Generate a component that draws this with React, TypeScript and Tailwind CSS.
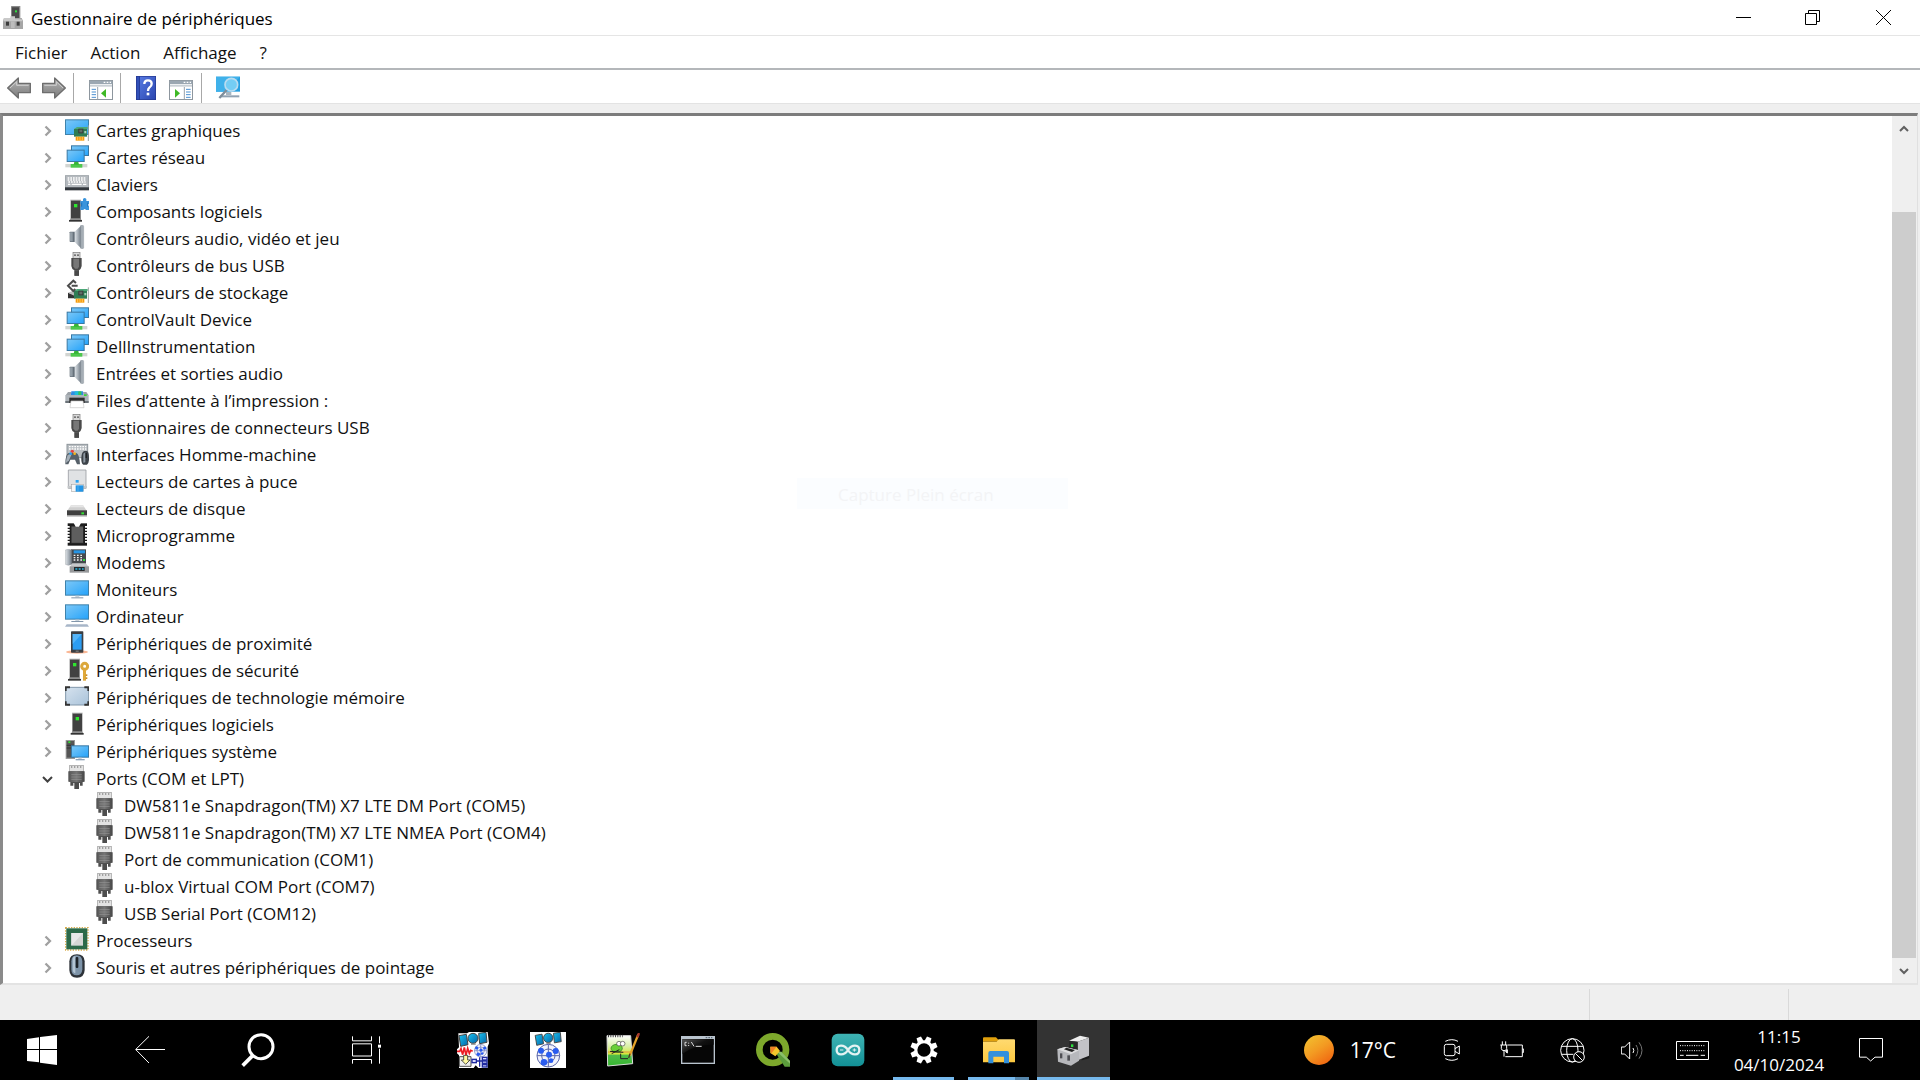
import type { ReactNode } from "react";

type P = { children?: ReactNode };

function Ico({ children }: P) {
  return (
    <svg viewBox="0 0 72 72" className="h-6 w-6 shrink-0 self-start" aria-hidden="true">
      {children}
    </svg>
  );
}

function Defs() {
  return (
    <svg className="absolute h-0 w-0" aria-hidden="true">
      <defs>
        <linearGradient id="screen" x1="0" y1="0" x2="1" y2="1">
          <stop offset="0" stopColor="#7cc8f8" />
          <stop offset="0.5" stopColor="#52b6f8" />
          <stop offset="1" stopColor="#22a2fc" />
        </linearGradient>
        <linearGradient id="steel" x1="0" y1="0" x2="1" y2="0">
          <stop offset="0" stopColor="#dfe4e8" />
          <stop offset="0.5" stopColor="#aab2ba" />
          <stop offset="1" stopColor="#6f7a84" />
        </linearGradient>
        <linearGradient id="plug" x1="0" y1="0" x2="1" y2="0">
          <stop offset="0" stopColor="#5a5a5a" />
          <stop offset="0.5" stopColor="#767676" />
          <stop offset="1" stopColor="#4a4a4a" />
        </linearGradient>
        <linearGradient id="arrow" x1="0" y1="0" x2="0" y2="1">
          <stop offset="0" stopColor="#b5b5b5" />
          <stop offset="1" stopColor="#7b7b7b" />
        </linearGradient>
        <linearGradient id="mem" x1="0" y1="0" x2="1" y2="1">
          <stop offset="0" stopColor="#d6e2ee" />
          <stop offset="1" stopColor="#a9c3da" />
        </linearGradient>
        <linearGradient id="sun" x1="0.1" y1="0" x2="0.8" y2="1">
          <stop offset="0" stopColor="#f2c230" />
          <stop offset="0.5" stopColor="#f39a22" />
          <stop offset="1" stopColor="#f06310" />
        </linearGradient>
        <linearGradient id="folder" x1="0" y1="0" x2="0" y2="1">
          <stop offset="0" stopColor="#ffda70" />
          <stop offset="1" stopColor="#fdc940" />
        </linearGradient>
        <linearGradient id="help" x1="0" y1="0" x2="1" y2="1">
          <stop offset="0" stopColor="#5578e0" />
          <stop offset="1" stopColor="#2b46b0" />
        </linearGradient>
        <linearGradient id="term" x1="0" y1="0" x2="1" y2="0.8">
          <stop offset="0" stopColor="#555" />
          <stop offset="0.5" stopColor="#111" />
          <stop offset="1" stopColor="#000" />
        </linearGradient>
        <linearGradient id="teal" x1="0" y1="0" x2="0" y2="1">
          <stop offset="0" stopColor="#3fb4b4" />
          <stop offset="1" stopColor="#129096" />
        </linearGradient>
        <linearGradient id="sat" x1="0" y1="0" x2="1" y2="1">
          <stop offset="0" stopColor="#19c3f0" />
          <stop offset="1" stopColor="#0565a8" />
        </linearGradient>
        <linearGradient id="note" x1="0" y1="0" x2="0" y2="1">
          <stop offset="0" stopColor="#ffffff" />
          <stop offset="0.35" stopColor="#d9f0a8" />
          <stop offset="0.6" stopColor="#d5e83a" />
          <stop offset="0.65" stopColor="#4fbb4a" />
          <stop offset="1" stopColor="#35b52f" />
        </linearGradient>
      </defs>
    </svg>
  );
}

function Board() {
  return (
    <>
      <path d="M27 36 H66 V59 H27Z" fill="#2f7d54" />
      <path d="M27 36 L36 30 H68 V36Z" fill="#4ca878" />
      <rect x="40" y="35" width="15" height="14" fill="#3b3b3b" />
      <rect x="43" y="38" width="9" height="8" fill="#5f6f66" />
      <rect x="58" y="42" width="6" height="7" fill="#a8d3b9" />
      <rect x="32" y="59" width="26" height="12" fill="#f59a0c" />
      <path d="M38 60 V71 M45 60 V71 M52 60 V71" stroke="#ffc659" strokeWidth="3" />
      <path d="M70 25 V72" stroke="#9ca3a0" strokeWidth="3" />
    </>
  );
}

function GraphicsIcon() {
  return (
    <Ico>
      <rect x="1.500" y="8.500" width="69" height="44" fill="url(#screen)" stroke="#3f82ab" strokeWidth="3" />
      <Board />
    </Ico>
  );
}

function NetworkIcon() {
  return (
    <Ico>
      <rect x="19.500" y="5.500" width="51" height="29" fill="url(#screen)" stroke="#3878a4" strokeWidth="3" />
      <rect x="6.500" y="18.500" width="51" height="34" fill="url(#screen)" stroke="#3878a4" strokeWidth="3" />
      <rect x="1" y="60" width="66" height="10" fill="#d2d5d2" />
      <rect x="17" y="60" width="35" height="11" fill="#4dc84c" />
      <path d="M28 54 H40 L42 62 H26Z" fill="#36b536" />
    </Ico>
  );
}

function KeyboardIcon() {
  return (
    <Ico>
      <rect x="1" y="14" width="70" height="37" fill="#b4b9be" stroke="#8e959b" strokeWidth="2" />
      <path d="M8 21 H64 M8 27 H64" stroke="#fff" strokeWidth="4" strokeDasharray="5 3" />
      <path d="M10 33 H62" stroke="#fff" strokeWidth="4" strokeDasharray="5 3" />
      <path d="M9 40 H16 M20 40 H50 M54 40 H64" stroke="#fff" strokeWidth="4" />
      <rect x="0" y="49" width="72" height="9" fill="#33383e" />
    </Ico>
  );
}

function Tower({ x = 17, y = 5 }: { x?: number; y?: number }) {
  return (
    <g transform={`translate(${x} ${y})`}>
      <rect x="2" y="0" width="32" height="60" fill="#b3b3b3" />
      <rect x="4" y="3" width="28" height="57" fill="#414141" />
      <rect x="13" y="13" width="10" height="10" fill="#2ee62e" />
      <rect x="-2" y="61" width="39" height="5" fill="#333" />
      <path d="M0 61 L4 56 H31 L36 61Z" fill="#8f8f8f" />
    </g>
  );
}

function ComponentIcon() {
  return (
    <Ico>
      <Tower x={14} y={5} />
      <path d="M46 9 H54 V3 Q59 -3 64 3 V9 H72 V17 Q66 19 72 25 V36 H63 Q59 30 55 36 H46 V26 Q50 21 46 17Z" fill="#3a94dc" />
      <path d="M50 14 V26 M68 14 V26" stroke="#1e72b8" strokeWidth="3" />
    </Ico>
  );
}

function SpeakerIcon() {
  return (
    <Ico>
      <rect x="14" y="20" width="17" height="31" rx="2" fill="#66717b" />
      <rect x="15" y="22" width="8" height="27" fill="#929da6" />
      <path d="M29 20 L48 2 V70 L29 51Z" fill="url(#steel)" />
      <path d="M47 1 H53 Q56 1 56 5 V68 Q56 71 52 71 L47 70Z" fill="#a5adb5" stroke="#7c868f" strokeWidth="1" />
    </Ico>
  );
}

function UsbIcon() {
  return (
    <Ico>
      <rect x="24" y="1" width="21" height="19" fill="#d8d8d8" stroke="#777" strokeWidth="2" />
      <rect x="28" y="7" width="4" height="5" fill="#444" />
      <rect x="37" y="7" width="4" height="5" fill="#444" />
      <path d="M19 18 H50 V42 Q48 52 42 55 H28 Q20 51 19 42Z" fill="#4a4a4a" />
      <path d="M25 20 H42 V44 L38 50 H30 L25 43Z" fill="#777" />
      <rect x="28" y="54" width="14" height="18" fill="#555" />
      <path d="M28 60 H42 M28 66 H42" stroke="#333" strokeWidth="2" />
    </Ico>
  );
}

function StorageIcon() {
  return (
    <Ico>
      <path d="M9 41 L28 48 V58 H9Z" fill="#333" />
      <path d="M9 41 L36 31 H44 L28 50Z" fill="#bbb" />
      <Board />
      <path d="M33 12 L25 5 L9 20 L25 36 L31 30 M20 20 H38" fill="none" stroke="#4b4b4b" strokeWidth="6" />
    </Ico>
  );
}

function PrinterIcon() {
  return (
    <Ico>
      <path d="M19 13 H54 L56 26 H17Z" fill="#2f8de4" />
      <rect x="29" y="13" width="11" height="13" fill="#22bdd8" />
      <rect x="40" y="13" width="9" height="13" fill="#2fca52" />
      <path d="M9 15 H19 L17 25 H2Z M54 15 H64 L71 25 H56Z" fill="#9ca2a8" />
      <rect x="1" y="24" width="70" height="23" fill="#aeb4b9" />
      <rect x="1" y="42" width="70" height="6" fill="#6c7379" />
      <rect x="57" y="22" width="8" height="5" fill="#35dd35" />
      <rect x="13" y="32" width="46" height="16" fill="#2e2e2e" />
      <path d="M18 42 H54 L57 62 H15Z" fill="#fff" stroke="#c5c5c5" strokeWidth="2" />
    </Ico>
  );
}

function HidIcon() {
  return (
    <Ico>
      <rect x="6" y="10" width="62" height="40" fill="#b9bec2" stroke="#8e959b" strokeWidth="3" />
      <path d="M12 17 H64 M12 24 H64" stroke="#fff" strokeWidth="4" strokeDasharray="5 3" />
      <path d="M1 70 Q1 38 11 36 H34 Q43 38 45 70 H36 L30 56 H16 L10 70Z" fill="#566069" />
      <path d="M3 66 Q4 44 12 40 H20 L12 58Z" fill="#a5afb8" />
      <circle cx="22" cy="31" r="5" fill="#e8423c" />
      <circle cx="17" cy="38" r="4" fill="#2ba2ee" />
      <circle cx="29" cy="38" r="4" fill="#f2b41c" />
      <path d="M55 71 Q48 68 49 50 Q50 32 58 30 H66 Q72 32 72 50 Q73 66 66 71Z" fill="#3d4349" />
      <path d="M55 65 V38 L61 34 V64Z" fill="#8d98a2" />
      <rect x="62" y="36" width="3" height="15" fill="#111" />
    </Ico>
  );
}

function CardIcon() {
  return (
    <Ico>
      <path d="M10 6 H63 V61 H10Z" fill="#e0e2e4" stroke="#9a9ea2" strokeWidth="2.500" />
      <rect x="8" y="54" width="58" height="7" fill="#c5c8ca" />
      <rect x="32" y="36" width="9" height="8" fill="#2aa2f2" />
      <rect x="20" y="49" width="35" height="22" fill="#f7f7f7" stroke="#9a9a9a" strokeWidth="1.500" />
      <rect x="32" y="52" width="23" height="19" fill="#2295e6" />
      <path d="M39 52 V71" stroke="#67bdf5" strokeWidth="2" />
    </Ico>
  );
}

function DiskIcon() {
  return (
    <Ico>
      <path d="M18 31 H54 L66 48 H6Z" fill="#cfcfcf" />
      <path d="M18 31 H54 L58 37 H14Z" fill="#e6e6e6" />
      <rect x="6" y="46" width="60" height="16" fill="#3f3f3f" />
      <rect x="6" y="61" width="60" height="4" fill="#b5b5b5" />
      <rect x="49" y="52" width="8" height="6" fill="#31e031" />
    </Ico>
  );
}

function ChipIcon() {
  return (
    <Ico>
      <rect x="8" y="4" width="58" height="67" fill="#1c1c1c" />
      <path d="M10 12 V66 M64 12 V66" stroke="#fff" strokeWidth="8" strokeDasharray="5 4" />
      <rect x="18" y="12" width="38" height="52" fill="#5e5e5e" stroke="#222" strokeWidth="3" />
      <path d="M26 3 H48 L42 14 H32Z" fill="#fff" />
    </Ico>
  );
}

function ModemIcon() {
  return (
    <Ico>
      <path d="M18 1 H63 V46 H18Z" fill="#45494d" />
      <rect x="26" y="4" width="34" height="9" fill="#2796e6" />
      <path d="M26 19 H52 M26 26 H52 M26 33 H52" stroke="#f2f2f2" strokeWidth="4" strokeDasharray="5 5" />
      <rect x="54" y="30" width="6" height="6" fill="#2fd93b" />
      <path d="M1 3 Q10 -2 20 3 V46 Q10 52 1 46Z" fill="url(#steel)" stroke="#868c91" />
      <path d="M22 43 H62 L71 53 H15Z" fill="#c6c8ca" />
      <rect x="14" y="52" width="58" height="19" fill="#97999b" />
      <rect x="27" y="54" width="32" height="12" fill="#262b2e" />
      <path d="M31 60 H56" stroke="#27b6e0" strokeWidth="4" strokeDasharray="6 4" />
    </Ico>
  );
}

function MonitorIcon() {
  return (
    <Ico>
      <rect x="1.500" y="14.500" width="69" height="43" fill="url(#screen)" stroke="#3f82ab" strokeWidth="3" />
      <rect x="31" y="59" width="12" height="5" fill="#c8d2da" />
      <rect x="19" y="64" width="36" height="3" fill="#8296ab" />
    </Ico>
  );
}

function ComputerIcon() {
  return (
    <Ico>
      <rect x="1.500" y="5.500" width="69" height="43" fill="url(#screen)" stroke="#3f82ab" strokeWidth="3" />
      <rect x="31" y="50" width="12" height="4" fill="#c8d2da" />
      <rect x="19" y="54" width="36" height="3" fill="#8296ab" />
      <path d="M5 64 H67 L72 71 H0Z" fill="#a7b6c8" />
    </Ico>
  );
}

function ProximityIcon() {
  return (
    <Ico>
      <ellipse cx="36" cy="66" rx="33" ry="5" fill="#f9a57a" opacity="0.8" />
      <rect x="18" y="4" width="37" height="64" rx="2" fill="#3b3e42" />
      <rect x="23" y="12" width="27" height="47" fill="#2c9df2" />
      <path d="M23 12 H50 L23 42Z" fill="#55b5f8" />
      <rect x="32" y="62" width="9" height="3" fill="#888" />
    </Ico>
  );
}

function SecurityIcon() {
  return (
    <Ico>
      <Tower x={11} y={5} />
      <circle cx="59" cy="28" r="9" fill="none" stroke="#dca83c" strokeWidth="9" />
      <rect x="54" y="38" width="9" height="33" fill="#e0a93a" />
      <rect x="62" y="52" width="5" height="5" fill="#c88c22" />
      <rect x="62" y="61" width="5" height="5" fill="#c88c22" />
    </Ico>
  );
}

function MemoryIcon() {
  return (
    <Ico>
      <rect x="2" y="10" width="69" height="53" rx="6" fill="url(#mem)" stroke="#8197aa" strokeWidth="3" />
      <path d="M2 21 V10 H15 M58 10 H70 V21 M70 52 V62 H58 M15 62 H2 V52" fill="none" stroke="#333" strokeWidth="6" />
    </Ico>
  );
}

function SoftwareIcon() {
  return (
    <Ico>
      <Tower x={19} y={5} />
    </Ico>
  );
}

function SystemIcon() {
  return (
    <Ico>
      <rect x="2" y="6" width="28" height="57" fill="#9a9a9a" />
      <rect x="5" y="9" width="22" height="50" fill="#555" />
      <rect x="10" y="10" width="6" height="5" fill="#2ee62e" />
      <path d="M5 22 H27 M5 30 H27" stroke="#333" strokeWidth="3" />
      <rect x="19.500" y="23.500" width="51" height="34" fill="url(#screen)" stroke="#3878a4" strokeWidth="3" />
      <rect x="40" y="59" width="10" height="4" fill="#c8d2da" />
      <rect x="32" y="63" width="27" height="4" fill="#8ea2b8" />
    </Ico>
  );
}

function PortIcon() {
  return (
    <Ico>
      <rect x="14" y="1" width="41" height="20" fill="#e3e3e3" stroke="#999" strokeWidth="2" />
      <path d="M18 6 H52" stroke="#8a8a8a" strokeWidth="4" strokeDasharray="4 5" />
      <path d="M10 19 H59 V50 H53 V62 H45 V54 H25 V62 H16 V50 H10Z" fill="#505050" />
      <rect x="13" y="19" width="43" height="32" fill="url(#plug)" />
      <path d="M19 29 H50 M19 36 H50 M19 43 H50" stroke="#999" strokeWidth="2" />
      <rect x="28" y="54" width="14" height="18" fill="#4d4d4d" />
    </Ico>
  );
}

function CpuIcon() {
  return (
    <Ico>
      <rect x="2" y="2" width="67" height="67" fill="none" stroke="#d9ad4c" strokeWidth="4" strokeDasharray="4 4" />
      <rect x="4" y="4" width="63" height="63" fill="#2c6a49" />
      <rect x="19" y="18" width="35" height="38" fill="#d5d7d5" />
      <path d="M19 18 H54 L19 56Z" fill="#e8e9e8" />
    </Ico>
  );
}

function MouseIcon() {
  return (
    <Ico>
      <path d="M36 1 Q58 1 59 22 V48 Q58 71 36 71 Q14 71 13 48 V22 Q14 1 36 1Z" fill="#2d3238" />
      <path d="M35 4 Q51 4 52 22 V46 Q51 64 35 64 Q19 64 19 46 V22 Q19 4 35 4Z" fill="#7d93a8" />
      <path d="M23 14 Q24 6 31 6 V58 Q22 56 23 42Z" fill="#b3c4d3" />
      <rect x="32" y="9" width="8" height="33" rx="3" fill="#1e2329" />
    </Ico>
  );
}

const groups: [string, () => ReactNode][] = [
  ["Cartes graphiques", GraphicsIcon],
  ["Cartes réseau", NetworkIcon],
  ["Claviers", KeyboardIcon],
  ["Composants logiciels", ComponentIcon],
  ["Contrôleurs audio, vidéo et jeu", SpeakerIcon],
  ["Contrôleurs de bus USB", UsbIcon],
  ["Contrôleurs de stockage", StorageIcon],
  ["ControlVault Device", NetworkIcon],
  ["DellInstrumentation", NetworkIcon],
  ["Entrées et sorties audio", SpeakerIcon],
  ["Files d’attente à l’impression :", PrinterIcon],
  ["Gestionnaires de connecteurs USB", UsbIcon],
  ["Interfaces Homme-machine", HidIcon],
  ["Lecteurs de cartes à puce", CardIcon],
  ["Lecteurs de disque", DiskIcon],
  ["Microprogramme", ChipIcon],
  ["Modems", ModemIcon],
  ["Moniteurs", MonitorIcon],
  ["Ordinateur", ComputerIcon],
  ["Périphériques de proximité", ProximityIcon],
  ["Périphériques de sécurité", SecurityIcon],
  ["Périphériques de technologie mémoire", MemoryIcon],
  ["Périphériques logiciels", SoftwareIcon],
  ["Périphériques système", SystemIcon],
  ["Ports (COM et LPT)", PortIcon],
  ["Processeurs", CpuIcon],
  ["Souris et autres périphériques de pointage", MouseIcon],
];

const ports = [
  "DW5811e Snapdragon(TM) X7 LTE DM Port (COM5)",
  "DW5811e Snapdragon(TM) X7 LTE NMEA Port (COM4)",
  "Port de communication (COM1)",
  "u-blox Virtual COM Port (COM7)",
  "USB Serial Port (COM12)",
];

function Chevron({ open }: { open: boolean }) {
  return (
    <svg viewBox="0 0 16 16" className="mr-2.5 h-4 w-4 shrink-0" fill="none" aria-hidden="true">
      {open ? (
        <path d="M4 6 L8.500 10.500 L13 6" stroke="#404040" strokeWidth="2" />
      ) : (
        <path d="M6.500 3.500 L11 8 L6.500 12.500" stroke="#a0a0a0" strokeWidth="2.300" />
      )}
    </svg>
  );
}

function Tree() {
  return (
    <ul role="tree" aria-label="Périphériques" className="min-w-0 flex-1 pt-px pl-9 text-[17px] leading-[27px]">
      {groups.map(([label, Icon]) => {
        const open = label.startsWith("Ports");
        return (
          <li key={label} role="treeitem" aria-expanded={open}>
            <button type="button" className="flex h-[27px] items-center whitespace-nowrap">
              <Chevron open={open} />
              <Icon />
              <span className="ml-[7px]">{label}</span>
            </button>
            {open && (
              <ul role="group" className="pl-[54px]">
                {ports.map((p) => (
                  <li key={p} role="treeitem">
                    <button type="button" className="flex h-[27px] items-center whitespace-nowrap">
                      <PortIcon />
                      <span className="ml-[7px]">{p}</span>
                    </button>
                  </li>
                ))}
              </ul>
            )}
          </li>
        );
      })}
    </ul>
  );
}

function TitleIcon() {
  return (
    <svg viewBox="0 0 60 72" className="h-6 w-5" aria-hidden="true">
      <path d="M25 1 H50 V36 H25Z" fill="#4a4a4a" />
      <path d="M25 1 L30 0 H52 V36 H49 V4 H25Z" fill="#8b8b8b" />
      <rect x="36" y="13" width="6" height="6" fill="#30e040" />
      <path d="M3 36 H56 L60 44 V69 H0 V44Z" fill="#a6a6a6" />
      <path d="M3 36 H22 V31 H36 V40 H56 L58 46 H1Z" fill="#c9c9c9" />
      <rect x="9" y="47" width="9" height="12" fill="#3c3c3c" />
      <rect x="41" y="47" width="9" height="12" fill="#3c3c3c" />
      <rect x="24" y="46" width="11" height="20" fill="#bdbdbd" />
    </svg>
  );
}

function ToolArrow({ flip }: { flip?: boolean }) {
  return (
    <svg viewBox="0 0 72 66" className={flip ? "h-[22px] w-6 -scale-x-100" : "h-[22px] w-6"} aria-hidden="true">
      <path d="M2 33 L34 3 V19 H70 V47 H34 V63Z" fill="url(#arrow)" stroke="#6e6e6e" strokeWidth="4" strokeLinejoin="round" />
      <path d="M9 33 L29 14 V25 H65" fill="none" stroke="#cfcfcf" strokeWidth="3" />
    </svg>
  );
}

function PanelIcon({ right }: { right?: boolean }) {
  return (
    <svg viewBox="0 0 72 60" className="mt-1 h-5 w-6" aria-hidden="true">
      <rect x="1.500" y="1.500" width="69" height="57" fill="#fff" stroke="#8d969e" strokeWidth="3" />
      <rect x="2" y="2" width="68" height="10" fill="#9ba7b2" />
      <path d="M44 7 H66" stroke="#fff" strokeWidth="4" strokeDasharray="5 4" />
      <rect x="3" y="14" width="66" height="6" fill="#c9d0d6" />
      {right ? (
        <>
          <path d="M46 21 V58" stroke="#98a2ab" strokeWidth="3" />
          <path d="M51 28 H65 M51 36 H65 M51 44 H65 M51 52 H65" stroke="#4a8fd0" strokeWidth="3" />
          <path d="M18 27 L33 40 L18 53Z" fill="#3fb925" />
        </>
      ) : (
        <>
          <path d="M26 21 V58" stroke="#98a2ab" strokeWidth="3" />
          <path d="M8 28 H21 M8 36 H21 M8 44 H21 M8 52 H21" stroke="#4a8fd0" strokeWidth="3" />
          <path d="M51 27 L36 40 L51 53Z" fill="#3fb925" />
        </>
      )}
    </svg>
  );
}

function Sep() {
  return <span className="h-[30px] w-px bg-[#a8a8a8]" />;
}

function Toolbar() {
  return (
    <div role="toolbar" className="flex h-[34px] items-center border-b border-[#e3e3e3] pt-0.5 pl-[7px]">
      <button type="button" aria-label="Précédent"><ToolArrow /></button>
      <button type="button" aria-label="Suivant" className="mr-[7px] ml-[11px]"><ToolArrow flip /></button>
      <Sep />
      <button type="button" aria-label="Afficher l’arborescence" className="mr-[7px] ml-[15px]"><PanelIcon /></button>
      <Sep />
      <button type="button" aria-label="Aide" className="mr-[13px] ml-[15px]">
        <svg viewBox="0 0 60 72" className="h-6 w-5" aria-hidden="true">
          <rect width="60" height="72" fill="#23378f" />
          <rect x="12" y="2" width="46" height="68" fill="url(#help)" />
          <rect x="2" y="2" width="8" height="68" fill="#3150b8" />
          <path d="M25 24 Q25 13 36 13 Q47 13 47 23 Q47 30 40 35 Q36 38 36 45" fill="none" stroke="#fff" strokeWidth="7" />
          <rect x="32" y="50" width="8" height="8" fill="#fff" />
        </svg>
      </button>
      <button type="button" aria-label="Afficher le volet" className="mr-2"><PanelIcon right /></button>
      <Sep />
      <button type="button" aria-label="Rechercher les modifications" className="ml-3.5">
        <svg viewBox="0 0 72 69" className="h-[23px] w-6" aria-hidden="true">
          <rect x="0" y="2" width="72" height="45" fill="#269fe0" />
          <path d="M0 2 H72 L30 47 H0Z" fill="#3fb1ea" />
          <rect x="30" y="48" width="16" height="9" fill="#a8b5c0" />
          <rect x="12" y="58" width="58" height="6" fill="#91a2b2" />
          <path d="M10 66 L32 42" stroke="#7f8e9b" strokeWidth="7" />
          <circle cx="46" cy="26" r="19" fill="#74cdf4" stroke="#b9dcf0" strokeWidth="5" />
        </svg>
      </button>
    </div>
  );
}

function Satellite() {
  return (
    <>
      <g stroke="#444" strokeWidth="3" fill="url(#sat)">
        <path d="M6 11 L28 7 L33 38 L11 43Z" />
        <path d="M65 4 L87 1 L90 31 L68 35Z" />
        <circle cx="48" cy="19" r="15" />
      </g>
      <path d="M42 36 H56" stroke="#777" strokeWidth="4" />
    </>
  );
}

function Targets() {
  return (
    <g>
      <circle r="34" fill="#f2f3fc" stroke="#5a66a8" strokeWidth="3" />
      <circle r="20" fill="none" stroke="#5a66a8" strokeWidth="3" />
      <path d="M-34 0 H34 M0 -34 V34" stroke="#5a66a8" strokeWidth="3" />
      <g fill="#2a5cf0">
        <circle cx="-22" cy="-15" r="9" />
        <circle cx="2" cy="-3" r="9" />
        <circle cx="22" cy="-14" r="9" />
        <circle cx="-13" cy="20" r="10" />
        <circle cx="8" cy="15" r="7" />
      </g>
    </g>
  );
}

function SatA() {
  return (
    <svg viewBox="0 0 96 108" className="h-9 w-8" aria-hidden="true">
      <path d="M4 4 H30 L36 0 H92 L96 34 L92 44 V108 H64 L56 100 L50 108 H6 V70 L0 64 V52 L6 46Z" fill="#fff" />
      <Satellite />
      <g transform="translate(71 56) scale(.55)"><Targets /></g>
      <path d="M0 58 H8 L12 50 L17 68 L22 46 L27 70 L32 49 L37 64 L41 55 L47 58" fill="none" stroke="#ee1c24" strokeWidth="5" />
      <path d="M7 74 H42 V103 H7Z" fill="#eee" stroke="#333" strokeWidth="2.500" />
      <path d="M20 70 H32 V84 H39 L26 97 L13 84 H20Z" fill="#fff9a0" stroke="#333" strokeWidth="2.500" />
      <g fill="#d7d9ff" stroke="#1f2aa0" strokeWidth="4">
        <path d="M60 87 H88 M68 76 V104" />
        <rect x="45" y="82" width="13" height="10" />
        <rect x="76" y="76" width="14" height="8" />
        <rect x="76" y="87" width="14" height="7" />
        <rect x="76" y="98" width="14" height="7" />
      </g>
    </svg>
  );
}

function SatB() {
  return (
    <svg viewBox="0 0 108 108" className="h-9 w-9" aria-hidden="true">
      <rect width="108" height="108" fill="#fff" />
      <g transform="translate(10 0) scale(.93)"><Satellite /></g>
      <g transform="translate(55 71)"><Targets /></g>
    </svg>
  );
}

function Notepad() {
  return (
    <svg viewBox="0 0 102 102" className="h-[34px] w-[34px]" aria-hidden="true">
      <path d="M3 8 H74 L80 92 L5 99Z" fill="url(#note)" stroke="#ddd" strokeWidth="3" />
      <path d="M6 9 H50" stroke="#444" strokeWidth="7" strokeDasharray="3 4" />
      <path d="M6 57 H76" stroke="#e8692a" strokeWidth="2" />
      <ellipse cx="32" cy="46" rx="17" ry="12" fill="#69cf38" stroke="#277a1b" strokeWidth="2" />
      <circle cx="39" cy="32" r="7" fill="#fff" stroke="#444" strokeWidth="2" />
      <circle cx="50" cy="32" r="7" fill="#fff" stroke="#444" strokeWidth="2" />
      <path d="M12 55 L52 58 M17 62 L40 50 M44 62 V77 H66" stroke="#222" strokeWidth="3" fill="none" />
      <path d="M97 4 L71 68" stroke="#e5a32a" strokeWidth="7" />
      <path d="M99 0 L94 13" stroke="#a8382d" strokeWidth="7" />
      <path d="M72 62 L68 75" stroke="#4b3a20" strokeWidth="4" />
    </svg>
  );
}

function Terminal() {
  return (
    <svg viewBox="0 0 102 84" className="h-7 w-[34px]" aria-hidden="true">
      <rect x="2" y="2" width="98" height="80" fill="#060606" stroke="#b9c4ce" strokeWidth="4" />
      <path d="M4 10 H98 V26 Q40 26 4 54Z" fill="url(#term)" />
      <rect x="2" y="2" width="98" height="7" fill="#b9c4ce" />
      <path d="M74 5 H94" stroke="#4a5968" strokeWidth="3" strokeDasharray="5 3" />
      <path d="M17 19 H12 V29 H17 M23 20 V23 M23 27 V30 M31 18 L39 31 M44 31 H62" stroke="#ddd" strokeWidth="3" fill="none" />
    </svg>
  );
}

function Qgis() {
  return (
    <svg viewBox="0 0 102 102" className="h-[34px] w-[34px]" aria-hidden="true">
      <circle cx="50" cy="50" r="40" fill="none" stroke="#7da82c" strokeWidth="20" />
      <path d="M58 58 L76 56 L102 84 V101 H86Z" fill="#5c9d3c" />
      <path d="M64 57 L76 56 L102 84 V92Z" fill="#8bbf6a" />
      <path d="M43 41 H62 L72 54 L58 70 L43 60Z" fill="#f3c72c" />
      <path d="M43 41 H62 L45 62Z" fill="#f08125" />
    </svg>
  );
}

function Arduino() {
  return (
    <svg viewBox="0 0 102 102" className="h-[34px] w-[34px]" aria-hidden="true">
      <rect x="2" y="2" width="98" height="98" rx="18" fill="url(#teal)" />
      <path d="M51 51 C40 33 17 34 17 51 C17 68 40 69 51 51 C62 33 85 34 85 51 C85 68 62 69 51 51Z" fill="none" stroke="#e4f3f3" strokeWidth="7" />
      <path d="M27 51 H37 M65 51 H76 M70 46 V56" stroke="#e4f3f3" strokeWidth="3" />
    </svg>
  );
}

function Gear() {
  return (
    <svg viewBox="-41 -41 82 82" className="h-7 w-7" aria-hidden="true">
      <g fill="#fff">
        {[22.5, 67.5, 112.5, 157.5, 202.5, 247.5, 292.5, 337.5].map((a) => (
          <path key={a} d="M-9 -25 L-7 -40 H7 L9 -25Z" transform={`rotate(${a})`} />
        ))}
      </g>
      <circle r="24" fill="none" stroke="#fff" strokeWidth="9" />
    </svg>
  );
}

function Folder() {
  return (
    <svg viewBox="0 0 96 81" className="h-[27px] w-8" aria-hidden="true">
      <path d="M0 4 Q0 1 3 1 H39 L46 8 V14 H0Z" fill="#e0a00c" />
      <path d="M0 14 H41 L47 7 H93 Q96 7 96 10 V76 H0Z" fill="url(#folder)" />
      <path d="M16 79 V48 Q16 42 22 42 H72 Q78 42 78 48 V79 H63 V59 H31 V79Z" fill="#3390dc" />
    </svg>
  );
}

function Device() {
  return (
    <svg viewBox="0 0 99 93" className="h-[31px] w-[33px]" aria-hidden="true">
      <path d="M74 68 L97 58 V70 L74 76Z" fill="#1c1c1c" />
      <path d="M36 17 L69 2 L96 8 L62 20Z" fill="#eeeeee" />
      <path d="M62 20 L96 8 V62 L62 76Z" fill="#c2c2c6" />
      <path d="M36 17 L62 20 V56 H36Z" fill="#292929" />
      <rect x="42" y="28" width="7" height="8" fill="#2ce03c" />
      <path d="M1 43 L24 36 L66 46 V77 L42 92 L3 80Z" fill="#b7b8bc" />
      <path d="M1 43 L24 36 L66 46 L42 58Z" fill="#dcdcde" />
      <path d="M21 43 L28 38 L54 45 L45 51Z" fill="#222" />
      <rect x="9" y="55" width="7" height="15" fill="#505055" />
      <rect x="31" y="61" width="8" height="16" fill="#505055" />
    </svg>
  );
}

const apps: [string, () => ReactNode][] = [
  ["Centre GNSS", SatA],
  ["u-center", SatB],
  ["Notepad++", Notepad],
  ["Invite de commandes", Terminal],
  ["QGIS", Qgis],
  ["Arduino", Arduino],
];

const trayIcons: [string, ReactNode][] = [
  [
    "Caméra",
    <svg key="c" viewBox="0 0 54 66" className="h-[22px] w-[18px]" fill="none" stroke="#fff" strokeWidth="3">
      <path d="M7 7 Q27 -3 45 7 M7 59 Q27 69 45 59" />
      <rect x="4" y="16" width="32" height="34" rx="6" />
      <path d="M36 29 L49 21 V45 L36 37" />
    </svg>,
  ],
  [
    "Batterie",
    <svg key="b" viewBox="0 0 72 54" className="h-[18px] w-6" fill="none" stroke="#fff" strokeWidth="3">
      <path d="M24 12 H67 V47 H16 M67 24 H71 V34 H67 M7 1 V12 M17 1 V12 M1 12 H23 M4 12 V23 Q5 29 12 29 Q20 29 20 23 V12 M12 29 V47" />
      <path d="M17 32 L22 26 V36Z" fill="#fff" />
    </svg>,
  ],
  [
    "Réseau",
    <svg key="g" viewBox="0 0 75 75" className="h-[25px] w-[25px]" fill="none" stroke="#fff" strokeWidth="3">
      <circle cx="37" cy="37" r="35" />
      <ellipse cx="37" cy="37" rx="17" ry="35" />
      <path d="M5 25 H69 M5 49 H40" />
      <circle cx="57" cy="57" r="16" fill="#000" />
      <path d="M46 46 L68 68" />
    </svg>,
  ],
  [
    "Volume",
    <svg key="v" viewBox="0 0 66 57" className="h-[19px] w-[22px]" fill="none" stroke="#fff" strokeWidth="3">
      <path d="M1 18 H11 L26 3 V54 L11 39 H1Z M36 21 Q41 28 36 36" />
      <path d="M45 12 Q56 28 45 46 M54 4 Q72 28 54 53" stroke="#777" />
    </svg>,
  ],
  [
    "Clavier tactile",
    <svg key="k" viewBox="0 0 99 57" className="h-[19px] w-[33px]" fill="none" stroke="#fff" strokeWidth="3">
      <path d="M1.500 1.500 H97.500 V55.500 H1.500Z M12 43 H23 M30 43 H67 M74 43 H87" />
      <path d="M12 14 H88 M12 29 H88" strokeDasharray="3 4" />
    </svg>,
  ],
];

function Taskbar() {
  return (
    <footer className="flex h-[60px] shrink-0 items-stretch bg-black text-white">
      <button type="button" aria-label="Démarrer" className="mr-3 flex w-[84px] items-center justify-center">
        <svg viewBox="0 0 90 90" className="h-[30px] w-[30px]" fill="#fff" aria-hidden="true">
          <path d="M0 12 L36 7 V42 H0Z M39 6 L90 0 V42 H39Z M0 45 H36 V82 L0 78Z M39 45 H90 V90 L39 83Z" />
        </svg>
      </button>
      <button type="button" aria-label="Retour" className="flex w-[108px] items-center justify-center">
        <svg viewBox="0 0 90 84" className="h-7 w-[30px]" fill="none" stroke="#fff" strokeWidth="3" aria-hidden="true">
          <path d="M90 40.500 H3 M42 1 L2 40.500 L42 81" />
        </svg>
      </button>
      <button type="button" aria-label="Rechercher" className="flex w-[108px] items-center justify-center">
        <svg viewBox="0 0 102 102" className="h-[34px] w-[34px]" fill="none" stroke="#fff" strokeWidth="9" aria-hidden="true">
          <circle cx="60" cy="41" r="36" />
          <path d="M35 68 L5 98" strokeWidth="11" />
        </svg>
      </button>
      <button type="button" aria-label="Affichage des tâches" className="mr-[15px] flex w-[108px] items-center justify-center">
        <svg viewBox="0 0 87 84" className="h-7 w-[29px]" fill="none" stroke="#fff" strokeWidth="3" aria-hidden="true">
          <path d="M1.500 1 V14.500 H58.500 V1 M1.500 23.500 H58.500 V60 H1.500Z M1.500 83 V70.500 H58.500 V83 M82.500 1 V22 M82.500 38 V83" />
          <rect x="78" y="26" width="9" height="9" fill="#fff" stroke="none" />
        </svg>
      </button>
      {apps.map(([name, Icon]) => (
        <button key={name} type="button" aria-label={name} className="flex w-[75px] items-center justify-center">
          <Icon />
        </button>
      ))}
      <button type="button" aria-label="Paramètres" className="mx-2 flex w-[61px] items-center justify-center border-b-[3px] border-[#76b9ed] pt-[3px]">
        <Gear />
      </button>
      <button type="button" aria-label="Explorateur de fichiers" className="mr-2 ml-1.5 flex w-[61px] flex-col items-center justify-between pt-[17px]">
        <Folder />
        <span className="flex h-[3px] w-full bg-[#76b9ed]"><span className="ml-auto w-3.5 bg-[#5585aa]" /></span>
      </button>
      <button type="button" aria-label="Gestionnaire de périphériques" className="flex w-[73px] items-center justify-center border-b-[3px] border-[#76b9ed] bg-[#333333] pt-[3px]">
        <Device />
      </button>
      <button type="button" className="ml-auto flex items-center gap-4 pr-[26px] text-[21px]">
        <svg viewBox="0 0 30 30" className="h-[30px] w-[30px]" aria-hidden="true">
          <circle cx="15" cy="15" r="15" fill="url(#sun)" />
        </svg>
        <span className="pt-0.5">17°C</span>
      </button>
      {trayIcons.map(([name, icon]) => (
        <button key={name} type="button" aria-label={name} className="flex w-[60px] items-center justify-center">
          {icon}
        </button>
      ))}
      <button type="button" className="flex w-[114px] flex-col items-center justify-center pt-0.5 text-[17px] leading-7">
        <time>11:15</time>
        <time>04/10/2024</time>
      </button>
      <button type="button" aria-label="Notifications" className="mr-3.5 flex w-[70px] items-center justify-center">
        <svg viewBox="0 0 72 72" className="h-6 w-6" fill="none" stroke="#fff" strokeWidth="3" aria-hidden="true">
          <path d="M1.500 1.500 H70.500 V57.500 H48 L35 69 L22 57.500 H1.500Z" />
        </svg>
      </button>
    </footer>
  );
}

function Scrollbar() {
  return (
    <div className="flex w-[25px] shrink-0 flex-col bg-[#efefef] pr-px">
      <button type="button" aria-label="Défiler vers le haut" className="flex h-[25px] items-center justify-center">
        <svg viewBox="0 0 12 12" className="h-3 w-3" fill="none" stroke="#606060" strokeWidth="2" aria-hidden="true"><path d="M2 8 L6 4 L10 8" /></svg>
      </button>
      <div className="flex flex-1 flex-col pt-[71px]">
        <div className="flex-1 bg-[#cdcdcd]" />
      </div>
      <button type="button" aria-label="Défiler vers le bas" className="flex h-[25px] items-center justify-center">
        <svg viewBox="0 0 12 12" className="h-3 w-3" fill="none" stroke="#606060" strokeWidth="2" aria-hidden="true"><path d="M2 4 L6 8 L10 4" /></svg>
      </button>
    </div>
  );
}

export default function App() {
  return (
    <div className="relative flex min-h-screen flex-col bg-white font-['Open_Sans','Noto_Sans',sans-serif] text-[#111]">
      <Defs />
      <header className="flex h-9 shrink-0 items-center border-b border-[#e5e5e5] pl-[3px] text-[17px]">
        <TitleIcon />
        <h1 className="ml-2 pt-0.5 text-black">Gestionnaire de périphériques</h1>
        <div className="ml-auto flex h-full items-center">
          <button type="button" aria-label="Réduire" className="flex h-full w-[69px] items-center justify-center">
            <svg viewBox="0 0 15 15" className="h-[15px] w-[15px]" stroke="#000" aria-hidden="true"><path d="M0 7.500 H15" /></svg>
          </button>
          <button type="button" aria-label="Restaurer" className="flex h-full w-[69px] items-center justify-center">
            <svg viewBox="0 0 15 15" className="h-[15px] w-[15px]" stroke="#000" fill="none" aria-hidden="true">
              <path d="M0.500 3.500 H11.500 V14.500 H0.500Z M3.500 3.500 V0.500 H14.500 V11.500 H11.500" />
            </svg>
          </button>
          <button type="button" aria-label="Fermer" className="flex h-full w-[73px] items-center justify-center">
            <svg viewBox="0 0 15 15" className="h-[15px] w-[15px]" stroke="#000" aria-hidden="true"><path d="M0 0 L15 15 M15 0 L0 15" /></svg>
          </button>
        </div>
      </header>
      <nav className="flex h-[34px] shrink-0 items-center gap-[23px] border-b-2 border-[#b4b7ba] pt-0.5 pl-[15px] text-[17px]">
        <button type="button">Fichier</button>
        <button type="button">Action</button>
        <button type="button">Affichage</button>
        <button type="button">?</button>
      </nav>
      <Toolbar />
      <main className="flex flex-1 flex-col bg-[#efefef] pt-[9px]">
        <div className="mr-0.5 flex flex-1 border-t-[3px] border-r border-b-2 border-l-[3px] border-t-[#7c7c7c] border-r-[#e0e0e0] border-b-[#e3e3e3] border-l-[#8a8a8a] bg-white">
          <Tree />
          <Scrollbar />
        </div>
        <div role="status" className="flex h-[35px] shrink-0 pt-1">
          <span className="flex-1" />
          <span className="w-[199px] border-l border-[#d9d9d9]" />
          <span className="w-[132px] border-l border-[#d9d9d9]" />
        </div>
      </main>
      <Taskbar />
      <div className="absolute top-[478px] left-[797px] flex h-[31px] w-[271px] items-center bg-[#fbfdff] pt-0.5 pl-[41px] text-[17px] text-[#f3f4f6]">
        Capture Plein écran
      </div>
    </div>
  );
}
